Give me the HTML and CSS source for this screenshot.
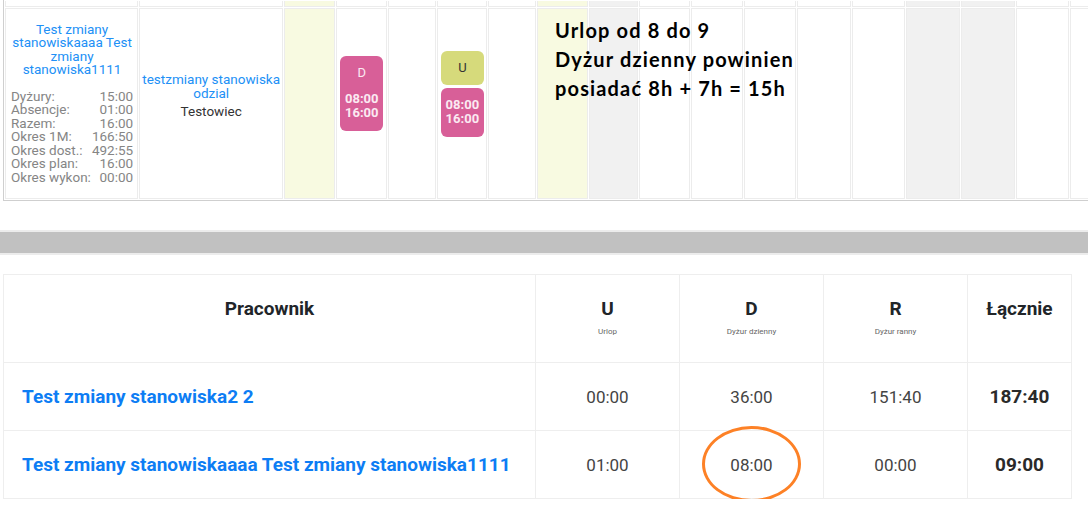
FILE: index.html
```html
<!DOCTYPE html>
<html lang="pl">
<head>
<meta charset="UTF-8">
<meta name="viewport" content="width=device-width, initial-scale=1.0">
<title>Grafik - podsumowanie</title>
<link rel="stylesheet" href="styles.css">
</head>
<body>

<div class="schedule">
    <table class="grid">
        <tr class="prev">
            <td class="w133"></td>
            <td class="w144"></td>
            <td class="w51 sat"></td>
            <td class="w51"></td>
            <td class="w48"></td>
            <td class="w50"></td>
            <td class="w48"></td>
            <td class="w51 sat"></td>
            <td class="w49 sun"></td>
            <td class="w51"></td>
            <td class="w51"></td>
            <td class="w52"></td>
            <td class="w54"></td>
            <td class="w53"></td>
            <td class="w54 sun"></td>
            <td class="w54 sun"></td>
            <td class="w53"></td>
            <td class="w54"></td>
        </tr>
        <tr class="main">
            <td class="emp">
                <a class="emp-name">Test zmiany stanowiskaaaa Test zmiany stanowiska1111</a>
                <div class="stats">
                    <div><span>Dyżury:</span><span>15:00</span></div>
                    <div><span>Absencje:</span><span>01:00</span></div>
                    <div><span>Razem:</span><span>16:00</span></div>
                    <div><span>Okres 1M:</span><span>166:50</span></div>
                    <div><span>Okres dost.:</span><span>492:55</span></div>
                    <div><span>Okres plan:</span><span>16:00</span></div>
                    <div><span>Okres wykon:</span><span>00:00</span></div>
                </div>
            </td>
            <td class="pos">
                <a class="pos-name">testzmiany stanowiska odzial</a>
                <div class="pos-role">Testowiec</div>
            </td>
            <td class="day sat"></td>
            <td class="day">
                <div class="shift shift-d">
                    <div class="shift-code">D</div>
                    <div class="shift-time">08:00<br>16:00</div>
                </div>
            </td>
            <td class="day"></td>
            <td class="day">
                <div class="shift shift-u">U</div>
                <div class="shift shift-d">
                    <div class="shift-time">08:00<br>16:00</div>
                </div>
            </td>
            <td class="day"></td>
            <td class="day sat"></td>
            <td class="day sun"></td>
            <td class="day"></td>
            <td class="day"></td>
            <td class="day"></td>
            <td class="day"></td>
            <td class="day"></td>
            <td class="day sun"></td>
            <td class="day sun"></td>
            <td class="day"></td>
            <td class="day"></td>
        </tr>
    </table>

    <div class="note">Urlop od 8 do 9<br>Dyżur dzienny powinien<br>posiadać 8h + 7h = 15h</div>
</div>

<div class="bar"></div>

<table class="summary">
    <tr>
        <th class="col-name">Pracownik</th>
        <th class="col-type">U<small>Urlop</small></th>
        <th class="col-type">D<small>Dyżur dzienny</small></th>
        <th class="col-type">R<small>Dyżur ranny</small></th>
        <th class="col-total">Łącznie</th>
    </tr>
    <tr>
        <td class="name"><a>Test zmiany stanowiska2 2</a></td>
        <td>00:00</td>
        <td>36:00</td>
        <td>151:40</td>
        <td class="total">187:40</td>
    </tr>
    <tr>
        <td class="name"><a>Test zmiany stanowiskaaaa Test zmiany stanowiska1111</a></td>
        <td>01:00</td>
        <td class="marked">08:00<span class="circle"></span></td>
        <td>00:00</td>
        <td class="total">09:00</td>
    </tr>
</table>

</body>
</html>
```

FILE: styles.css
```css
body {
    margin: 0;
    font-family: Roboto, "Liberation Sans", sans-serif;
    background: #fff;
    overflow: hidden;
}

/* grafik */
.schedule {
    position: relative;
    overflow: hidden;
    padding-left: 3px;
}
.grid {
    table-layout: fixed;
    width: 1122px;
    border-collapse: separate;
    border-spacing: 1px;
    border-left: 1px solid #cfcfcf;
    border-bottom: 1px solid #cfcfcf;
    font-size: 13.5px;
    line-height: 13.5px;
}
.grid td {
    box-sizing: border-box;
    border: 1px solid #ececec;
    padding: 0;
}
.grid .prev td {
    border-top: 0;
    height: 6px;
}
.grid .main td {
    height: 191px;
    vertical-align: middle;
}
.grid .sat { background: #f8fae1; }
.grid .sun { background: #f1f1f1; }

.w133 { width: 133px; }
.w144 { width: 144px; }
.w48 { width: 48px; }
.w49 { width: 49px; }
.w50 { width: 50px; }
.w51 { width: 51px; }
.w52 { width: 52px; }
.w53 { width: 53px; }
.w54 { width: 54px; }

.grid td.emp {
    padding: 0 4px 0 5px;
    text-align: center;
}
.emp-name, .pos-name {
    display: block;
    color: #2190f6;
}
.stats {
    margin-top: 13px;
    color: #858585;
    text-align: left;
}
.stats div {
    display: flex;
    justify-content: space-between;
}
.grid td.pos {
    text-align: center;
    padding-bottom: 15px;
}
.pos-role {
    margin-top: 5px;
    color: #333;
}

.grid td.day {
    padding-bottom: 20px;
}
.shift {
    width: 43px;
    margin: 0 auto;
    border-radius: 6px;
    text-align: center;
    font-size: 13px;
    line-height: 14px;
}
.shift-d {
    background: #d85f98;
    color: #fbeaf2;
    padding: 10px 0 11px;
}
.shift-code {
    margin-bottom: 12px;
}
.shift-time {
    font-weight: bold;
}
.shift-u {
    background: #d6da7b;
    color: #333;
    padding: 10px 0;
    margin-bottom: 3px;
}

.note {
    position: absolute;
    left: 555px;
    top: 16px;
    font-family: Lato, "Open Sans", sans-serif;
    font-weight: bold;
    font-size: 20px;
    letter-spacing: 1.15px;
    line-height: 29px;
    color: #000;
}

.bar {
    margin-top: 29px;
    height: 21px;
    background: #c1c1c1;
    border-top: 2px solid #ececec;
    border-bottom: 2px solid #ececec;
}

/* podsumowanie */
.summary {
    margin: 19px 0 0 3px;
    width: 1069px;
    border-collapse: collapse;
    table-layout: fixed;
    color: #212529;
}
.summary th, .summary td {
    border: 1px solid #eeeeee;
    text-align: center;
}
.summary th {
    height: 88px;
    box-sizing: border-box;
    vertical-align: top;
    padding: 23px 0 0;
    font-size: 19px;
    line-height: 22px;
    font-weight: bold;
}
.summary th small {
    display: block;
    margin-top: 7px;
    font-size: 8px;
    line-height: 10px;
    font-weight: normal;
    color: #666;
}
.col-name { width: 532px; }
.col-type { width: 144px; }
.col-total { width: 104px; }

.summary td {
    height: 68px;
    box-sizing: border-box;
    font-size: 17px;
    color: #444;
}
.summary td.name {
    text-align: left;
    padding-left: 18px;
}
.summary td.name a {
    color: #0d7df4;
    font-weight: bold;
    font-size: 19px;
}
.summary td.total {
    font-weight: bold;
    font-size: 19px;
    color: #2a2a2a;
}
.summary td.marked {
    position: relative;
}
.circle {
    position: absolute;
    left: 22px;
    top: -5px;
    width: 93px;
    height: 70px;
    border: 3.5px solid #fd8126;
    border-radius: 50%;
}
```
